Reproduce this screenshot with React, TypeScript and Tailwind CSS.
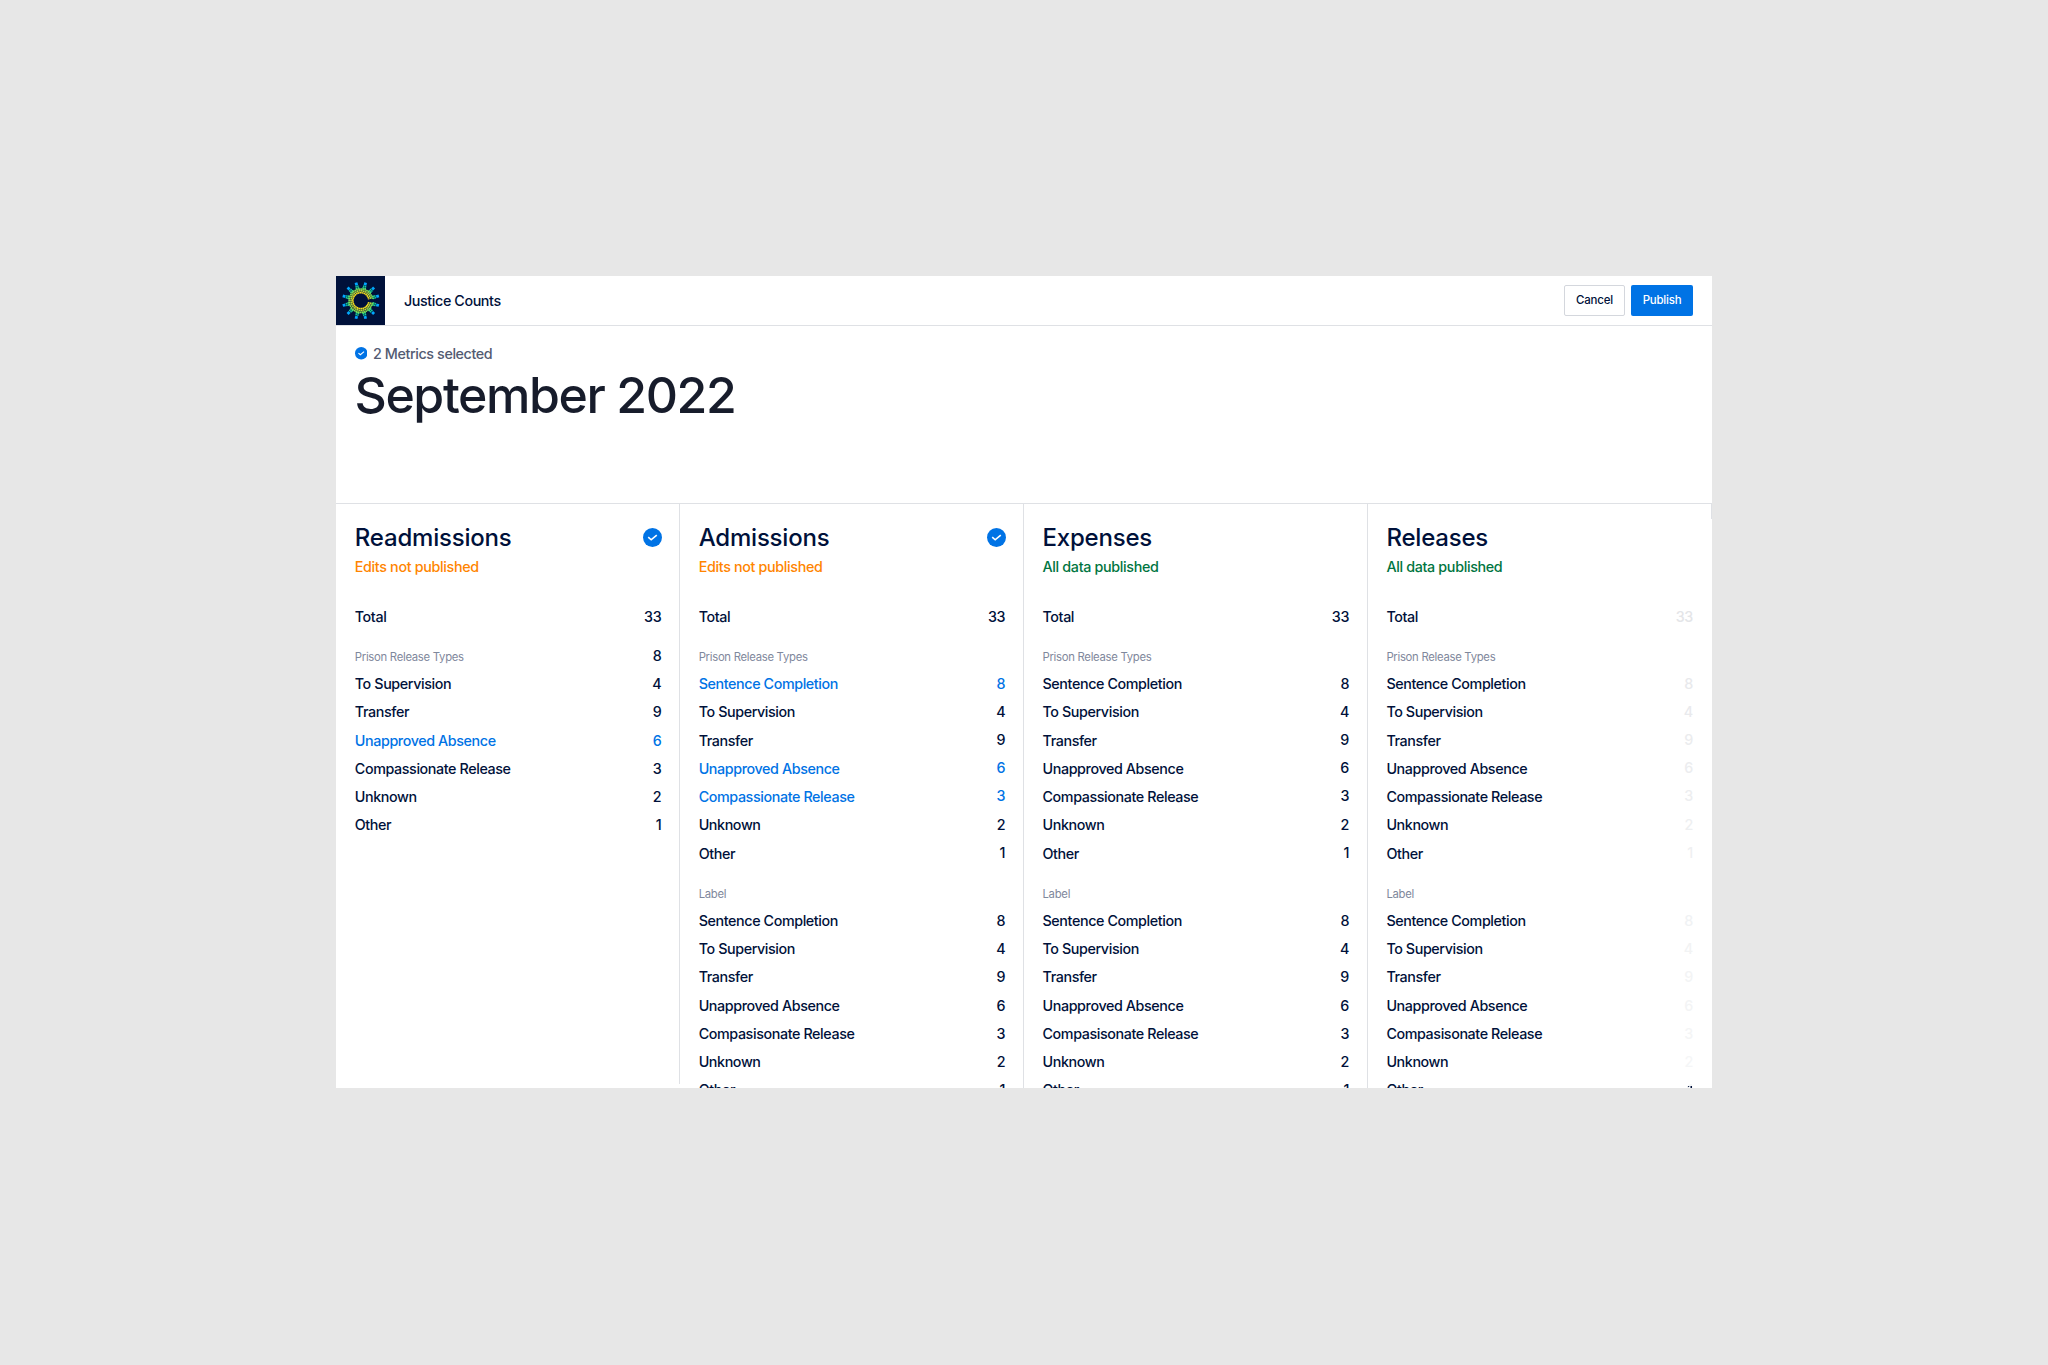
import React from "react";

type Row = { name: string; value: string; edited?: boolean; tone?: string };
type Group = { label: string; labelValue?: string; rows: Row[]; raised?: boolean };
type Metric = {
  title: string;
  published: boolean;
  selected?: boolean;
  totalTone?: string;
  groups: Group[];
};

const NAMES = ["Sentence Completion", "To Supervision", "Transfer", "Unapproved Absence", "Compassionate Release", "Unknown", "Other"];
const LABEL_NAMES = NAMES.map((n) => (n === "Compassionate Release" ? "Compasisonate Release" : n));
const VALUES = ["8", "4", "9", "6", "3", "2", "1"];
const FADE_A = ["text-[#e8e9ec]", "text-[#e9eaed]", "text-[#ebecee]", "text-[#ecedef]", "text-[#edeef0]", "text-[#eeeff1]", "text-[#eff0f2]"];
const FADE_B = [
  "text-[#f0f2f4]",
  "text-[#f2f3f4]",
  "text-[#f3f4f5]",
  "text-[#f3f4f5]",
  "text-[#f4f5f6]",
  "text-[#f5f6f7]",
  "bg-[linear-gradient(#f5f6f7_0_31%,#00113a_31%)] bg-clip-text text-transparent",
];

const rows = (names: string[], edited: number[] = [], tones: string[] = []): Row[] =>
  names.map((name, i) => ({ name, value: VALUES[i], edited: edited.includes(i), tone: tones[i] }));

const METRICS: Metric[] = [
  {
    title: "Readmissions",
    published: false,
    selected: true,
    groups: [{ label: "Prison Release Types", labelValue: "8", rows: rows(NAMES, [3]).slice(1) }],
  },
  {
    title: "Admissions",
    published: false,
    selected: true,
    groups: [
      { label: "Prison Release Types", rows: rows(NAMES, [0, 3, 4]), raised: true },
      { label: "Label", rows: rows(LABEL_NAMES) },
    ],
  },
  {
    title: "Expenses",
    published: true,
    groups: [
      { label: "Prison Release Types", rows: rows(NAMES), raised: true },
      { label: "Label", rows: rows(LABEL_NAMES) },
    ],
  },
  {
    title: "Releases",
    published: true,
    totalTone: "text-[#e4e5e8]",
    groups: [
      { label: "Prison Release Types", rows: rows(NAMES, [], FADE_A), raised: true },
      { label: "Label", rows: rows(LABEL_NAMES, [], FADE_B) },
    ],
  },
];

function Logo() {
  const spokes = Array.from({ length: 12 }, (_, i) => 15 + i * 30);
  return (
    <svg viewBox="-74.500 -74 147 147" className="h-[49px] w-[49px] shrink-0 bg-[#00113a]">
      {spokes.map((a) => (
        <g key={a} transform={`rotate(${a})`}>
          <rect x="36" y="-5.500" width="5" height="5" fill="#2fe08a" />
          <rect x="36" y="0.500" width="5" height="5" fill="#2fe08a" />
          <rect x="41.800" y="-5" width="4.500" height="4.600" fill="#12d0a0" />
          <rect x="41.800" y="0.400" width="4.500" height="4.600" fill="#12d0a0" />
          <rect x="47.800" y="-4.200" width="8.400" height="8.400" fill="#00a8ff" />
        </g>
      ))}
      <g fill="none" transform="rotate(8)">
        <path d="M35 1A35 35 0 1 1 33.500 -10" stroke="#84dc52" strokeWidth="5" strokeDasharray="5 1" />
        <path d="M29.500 1A29.500 29.500 0 1 1 28.300 -8.500" stroke="#b8dc38" strokeWidth="4.800" strokeDasharray="5 1" />
        <path d="M24 1A24 24 0 1 1 23 -7" stroke="#f5e01e" strokeWidth="4.800" strokeDasharray="5 0.800" />
      </g>
    </svg>
  );
}

function Check({ className }: { className: string }) {
  return (
    <svg viewBox="0 0 20 20" className={className}>
      <circle cx="10" cy="10" r="10" fill="#0073e5" />
      <path d="M5.500 9.700L8.600 12.400L14.500 7.400" fill="none" stroke="#fff" strokeWidth="1.700" />
    </svg>
  );
}

function Line({ row, raised }: { row: Row; raised?: boolean }) {
  const tone = row.edited ? "text-[#0073e5]" : "text-[#00113a]";
  return (
    <div className={`flex h-[28.22px] items-center justify-between ${tone}`}>
      <span>{row.name}</span>
      <span className={`${raised ? "pb-[1.400px]" : ""} ${row.tone ?? ""}`}>{row.value}</span>
    </div>
  );
}

function Column({ metric, edge }: { metric: Metric; edge: string }) {
  return (
    <section className={`flex-1 pt-[15px] pl-[18.800px] ${edge}`}>
      <div className="flex h-[38px] items-center justify-between">
        <h2 className="text-[24px] tracking-[-0.2px] text-[#00113a]">{metric.title}</h2>
        {metric.selected && <Check className="-mr-[0.600px] mb-[1px] h-[19px] w-[19px]" />}
      </div>
      <p className={`h-[20px] leading-[20px] tracking-[-0.340px] ${metric.published ? "text-[#007541]" : "text-[#ff8500]"}`}>
        {metric.published ? "All data published" : "Edits not published"}
      </p>
      <div className="mt-[25.300px]">
        <Line row={{ name: "Total", value: "33", tone: metric.totalTone }} />
        {metric.groups.map((g) => (
          <div key={g.label} className="pt-[11.100px]">
            <div className="flex h-[28.220px] items-center justify-between text-[#00113a]">
              <span className="pt-[3px] text-[11.300px] font-normal tracking-[-0.280px] text-[#7f889c]">{g.label}</span>
              <span>{g.labelValue}</span>
            </div>
            {g.rows.map((r) => (
              <Line key={r.name} row={r} raised={g.raised} />
            ))}
          </div>
        ))}
      </div>
    </section>
  );
}

const EDGES = [
  "h-[580px] border-r border-[#dfe1e5] pr-[17.600px]",
  "border-r border-[#dfe1e5] pr-[17.600px]",
  "border-r border-[#dfe1e5] pr-[17.600px]",
  "pr-[18.700px]",
];

export default function App() {
  return (
    <div className="h-[1365px] w-[2048px] overflow-hidden bg-[#e7e7e7] pt-[276px] pl-[336px] font-['Inter',sans-serif] text-[14.320px] font-[450] tracking-[-0.400px]">
      <div className="flex h-[812px] w-[1375.500px] flex-col overflow-hidden bg-white">
        <header className="flex h-[50px] shrink-0 items-start border-b border-[#dfe1e5] pr-[18.500px]">
          <Logo />
          <span className="pl-[19px] leading-[49px] text-[#00113a]">Justice Counts</span>
          <div className="ml-auto flex gap-[6px] pt-[9px] text-[11.460px] font-medium tracking-[-0.200px]">
            <button className="h-[31px] w-[61px] rounded-[2px] border border-[#d4d7dd] pt-[1px] text-[#00113a]">Cancel</button>
            <button className="h-[31px] w-[62px] rounded-[2px] bg-[#0073e5] pt-[1px] text-white">Publish</button>
          </div>
        </header>
        <div className="h-[177px] shrink-0 pt-[16.500px] pl-[18.500px]">
          <div className="flex h-[22px] items-center gap-[6px] text-[#535b72]">
            <Check className="h-[12.500px] w-[12.500px]" />
            <span>2 Metrics selected</span>
          </div>
          <h1 className="h-[62px] text-[50px] leading-[61px] font-medium tracking-[-1.400px] text-[#171c2b]">September 2022</h1>
        </div>
        <main className="relative flex min-h-0 flex-1 border-t border-[#dfe1e5]">
          {METRICS.map((m, i) => (
            <Column key={m.title} metric={m} edge={EDGES[i]} />
          ))}
          <i className="absolute top-0 right-0 h-[15px] w-px bg-[#dfe1e5]" />
        </main>
      </div>
    </div>
  );
}
